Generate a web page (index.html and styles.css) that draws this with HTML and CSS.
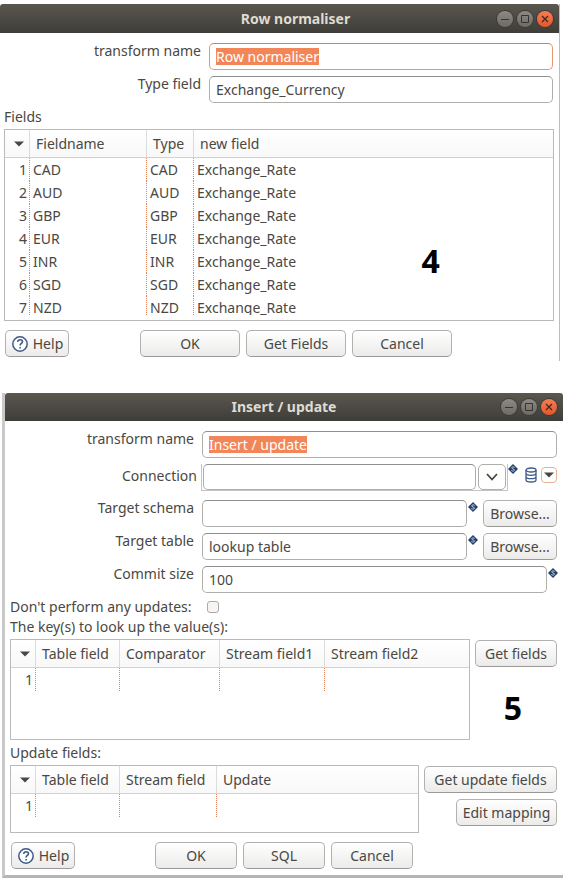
FILE: index.html
```html
<!DOCTYPE html>
<html lang="en">
<head>
<meta charset="utf-8">
<meta name="viewport" content="width=device-width, initial-scale=1">
<title>Transform dialogs</title>
<link rel="stylesheet" href="styles.css">
</head>
<body>
<svg class="defs" aria-hidden="true">
  <symbol id="help" viewBox="0 0 18 18">
    <circle cx="9" cy="9" r="7.2" fill="#fff" stroke="#3d5a86" stroke-width="1.5"/>
    <path d="M6.6 6.9c.2-1.5 1.2-2.2 2.5-2.2 1.4 0 2.4.8 2.4 2 0 1.800-2.400 1.800-2.400 3.800M9.100 12v1.600" fill="none" stroke="#3d5a86" stroke-width="1.600"/>
  </symbol>
  <symbol id="variable" viewBox="0 0 10 10">
    <path d="M5 0l5 5-5 5-5-5z" fill="#24406c"/>
    <path d="M6.700 3.400C5.800 2.600 3.700 2.700 3.700 3.900S6.500 4.900 6.500 6.100 4.300 7.400 3.300 6.500" fill="none" stroke="#c3cede" stroke-width="1"/>
  </symbol>
  <symbol id="database" viewBox="0 0 12 16">
    <g fill="none" stroke="#3d5a86" stroke-width="1.300">
      <ellipse cx="6" cy="3" rx="5" ry="2"/>
      <path d="M1 3v10c0 1.200 2.200 2 5 2s5-.8 5-2V3M1 6.300c0 1.200 2.200 2 5 2s5-.8 5-2M1 9.700c0 1.200 2.200 2 5 2s5-.8 5-2"/>
    </g>
  </symbol>
  <symbol id="triangle" viewBox="0 0 10 6"><path d="M0 .5h10L5 5.500z" fill="#4a4742"/></symbol>
  <symbol id="chevron" viewBox="0 0 12 8"><path d="M1 1l5 5.500L11 1" fill="none" stroke="#4a4742" stroke-width="1.800"/></symbol>
  <symbol id="minimise" viewBox="0 0 16 16"><path d="M4 8.500h8" stroke="#35342f"/></symbol>
  <symbol id="maximise" viewBox="0 0 16 16"><path d="M4.500 4.500h7v7h-7z" fill="none" stroke="#35342f"/></symbol>
  <symbol id="close" viewBox="0 0 16 16"><path d="M5 5l6 6M11 5l-6 6" stroke="#3c2a20" stroke-width="1.200"/></symbol>
</svg>

<main>
<section class="window normaliser">
  <header class="titlebar">
    <h1>Row normaliser</h1>
    <div class="controls">
      <button type="button" class="control" aria-label="Minimise"><svg><use href="#minimise"/></svg></button>
      <button type="button" class="control" aria-label="Maximise"><svg><use href="#maximise"/></svg></button>
      <button type="button" class="control close" aria-label="Close"><svg><use href="#close"/></svg></button>
    </div>
  </header>
  <form class="content">
    <div class="row">
      <label for="n-name">transform name</label>
      <div class="field active"><input id="n-name" class="selected" size="12" value="Row normaliser"></div>
    </div>
    <div class="row">
      <label for="n-type">Type field</label>
      <div class="field"><input id="n-type" value="Exchange_Currency"></div>
    </div>
    <h2>Fields</h2>
    <div class="frame fields-frame">
      <div class="clip">
        <table>
          <colgroup><col class="c-index"><col class="c-name"><col class="c-type"><col></colgroup>
          <thead><tr><th aria-label="Row number"><svg class="sort"><use href="#triangle"/></svg></th><th>Fieldname</th><th>Type</th><th>new field</th></tr></thead>
          <tbody>
            <tr><td>1</td><td>CAD</td><td>CAD</td><td>Exchange_Rate</td></tr>
            <tr><td>2</td><td>AUD</td><td>AUD</td><td>Exchange_Rate</td></tr>
            <tr><td>3</td><td>GBP</td><td>GBP</td><td>Exchange_Rate</td></tr>
            <tr><td>4</td><td>EUR</td><td>EUR</td><td>Exchange_Rate</td></tr>
            <tr><td>5</td><td>INR</td><td>INR</td><td>Exchange_Rate</td></tr>
            <tr><td>6</td><td>SGD</td><td>SGD</td><td>Exchange_Rate</td></tr>
            <tr><td>7</td><td>NZD</td><td>NZD</td><td>Exchange_Rate</td></tr>
          </tbody>
        </table>
      </div>
      <span class="step step-over">4</span>
    </div>
    <footer class="actions">
      <button type="button" class="btn help"><svg><use href="#help"/></svg>Help</button>
      <button type="button" class="btn">OK</button>
      <button type="button" class="btn">Get Fields</button>
      <button type="button" class="btn">Cancel</button>
    </footer>
  </form>
</section>

<section class="window update">
  <header class="titlebar">
    <h1>Insert / update</h1>
    <div class="controls">
      <button type="button" class="control" aria-label="Minimise"><svg><use href="#minimise"/></svg></button>
      <button type="button" class="control" aria-label="Maximise"><svg><use href="#maximise"/></svg></button>
      <button type="button" class="control close" aria-label="Close"><svg><use href="#close"/></svg></button>
    </div>
  </header>
  <form class="content">
    <div class="row">
      <label for="u-name">transform name</label>
      <div class="field"><input id="u-name" class="selected" size="12" value="Insert / update"></div>
    </div>
    <div class="row connection">
      <label for="u-conn">Connection</label>
      <div class="combo">
        <div class="field"><input id="u-conn"></div>
        <button type="button" class="drop" aria-label="Show connections"><svg><use href="#chevron"/></svg></button>
      </div>
      <svg class="variable"><use href="#variable"/></svg>
      <div class="tools">
        <svg class="database"><use href="#database"/></svg>
        <button type="button" class="menu" aria-label="Connection menu"><svg><use href="#triangle"/></svg></button>
      </div>
    </div>
    <div class="row">
      <label for="u-schema">Target schema</label>
      <div class="field"><input id="u-schema"></div>
      <svg class="variable"><use href="#variable"/></svg>
      <button type="button" class="btn browse">Browse...</button>
    </div>
    <div class="row">
      <label for="u-table">Target table</label>
      <div class="field"><input id="u-table" value="lookup table"></div>
      <svg class="variable"><use href="#variable"/></svg>
      <button type="button" class="btn browse">Browse...</button>
    </div>
    <div class="row">
      <label for="u-commit">Commit size</label>
      <div class="field"><input id="u-commit" value="100"></div>
      <svg class="variable"><use href="#variable"/></svg>
    </div>
    <div class="check"><label for="u-skip">Don't perform any updates:</label><input type="checkbox" id="u-skip"></div>
    <h2>The key(s) to look up the value(s):</h2>
    <div class="split">
      <div class="frame keys-frame">
        <table>
          <colgroup><col class="c-index"><col class="c-table"><col class="c-comparator"><col class="c-stream1"><col></colgroup>
          <thead><tr><th aria-label="Row number"><svg class="sort"><use href="#triangle"/></svg></th><th>Table field</th><th>Comparator</th><th>Stream field1</th><th>Stream field2</th></tr></thead>
          <tbody><tr><td>1</td><td></td><td></td><td></td><td></td></tr></tbody>
        </table>
      </div>
      <div class="side">
        <button type="button" class="btn">Get fields</button>
        <span class="step">5</span>
      </div>
    </div>
    <h2>Update fields:</h2>
    <div class="split">
      <div class="frame update-frame">
        <table>
          <colgroup><col class="c-index"><col class="c-table"><col class="c-stream"><col></colgroup>
          <thead><tr><th aria-label="Row number"><svg class="sort"><use href="#triangle"/></svg></th><th>Table field</th><th>Stream field</th><th>Update</th></tr></thead>
          <tbody><tr><td>1</td><td></td><td></td><td></td></tr></tbody>
        </table>
      </div>
      <div class="side wide">
        <button type="button" class="btn">Get update fields</button>
        <button type="button" class="btn mapping">Edit mapping</button>
      </div>
    </div>
    <footer class="actions">
      <button type="button" class="btn help"><svg><use href="#help"/></svg>Help</button>
      <button type="button" class="btn">OK</button>
      <button type="button" class="btn">SQL</button>
      <button type="button" class="btn">Cancel</button>
    </footer>
  </form>
</section>
</main>
</body>
</html>
```
FILE: styles.css
```css
* { box-sizing: border-box; }

body {
  margin: 0;
  background: #fff;
  color: #4a4843;
  font: 14px/20px "Noto Sans", "Open Sans", sans-serif;
}

button, input { font: inherit; color: inherit; margin: 0; }
svg { display: block; flex: none; }
.defs { position: absolute; width: 0; height: 0; }

main {
  display: flex;
  flex-direction: column;
  gap: 32px;
  padding: 4px 5px 0 0;
}

/* Windows */
.normaliser { margin-right: 3px; border-right: 1px solid #bdbdbd; }
.update {
  margin-left: 2px;
  border-left: 3px solid #c9c9c9;
  border-bottom: 3px solid #b5b5b5;
}

.titlebar {
  display: flex;
  align-items: center;
  height: 29px;
  padding: 0 6px 0 62px;
  background: linear-gradient(#5a574e, #3e3d39);
  border-radius: 3px 3px 0 0;
  color: #dfdbd2;
}
.normaliser .titlebar { padding-left: 94px; }
.update .titlebar { height: 28px; }
.titlebar h1 {
  flex: 1;
  margin: 0;
  text-align: center;
  font-size: 14px;
  line-height: 20px;
  font-weight: 700;
}
.controls { display: flex; gap: 4px; }
.control {
  width: 16px;
  height: 16px;
  padding: 0;
  border: 0;
  border-radius: 50%;
  background: linear-gradient(#8c8a82, #6c6a63);
  box-shadow: 0 0 0 1px #3c3b37;
}
.control svg { width: 16px; height: 16px; }
.control.close { background: linear-gradient(#f67d53, #e5582b); }

/* Form rows */
.content { display: flex; flex-direction: column; padding: 10px 6px 4px 4px; }
.update .content { padding: 10px 6px 6px 5px; }
.row { display: flex; align-items: flex-start; margin-bottom: 6px; }
.row label {
  flex: none;
  width: 197px;
  margin-right: 8px;
  line-height: 16px;
  text-align: right;
}
.update .row label { width: 184px; }

.field {
  flex: 1;
  display: flex;
  align-items: center;
  min-width: 0;
  height: 27px;
  padding: 0 6px;
  border: 1px solid #b0aeab;
  border-top-color: #8f8f8f;
  border-radius: 5px;
  background: #fff;
}
.field.active { border-color: #e9966f; border-top-color: #df7d52; }
.field input {
  width: 100%;
  height: 20px;
  padding: 0;
  border: 0;
  outline: 0;
  background: none;
}
.field .selected {
  width: auto;
  height: 17px;
  field-sizing: content;
  background: #f28659;
  color: #fff;
}

.update .connection { margin-bottom: 9px; }
.update .connection label { width: 187px; margin-right: 4px; line-height: 24px; }
.combo {
  flex: 1;
  display: flex;
  gap: 2px;
  padding: 0 1px;
  border: 1px solid #c4c4c4;
  border-top: 0;
}
.drop {
  display: grid;
  place-items: center;
  width: 28px;
  height: 26px;
  padding: 0;
  border: 1px solid #b0aeab;
  border-radius: 5px;
  background: #fff;
}
.combo .field { height: 26px; }
.drop svg { width: 12px; height: 8px; }
.variable { width: 10px; height: 10px; margin: 2px 0 0 1px; }
.connection .variable { margin: 0; }
.update .row:nth-child(5) { margin-right: -1px; }
.tools { display: flex; gap: 4px; margin: 3px 0 0 7px; }
.database { width: 12px; height: 16px; }
.menu {
  display: grid;
  place-items: center;
  width: 16px;
  height: 16px;
  padding: 0;
  border: 1px solid #eab295;
  border-radius: 4px;
  background: #fff;
}
.menu svg { width: 10px; height: 6px; }

/* Buttons */
.btn {
  height: 27px;
  padding: 0;
  border: 1px solid #b3b1ae;
  border-bottom-color: #9b9996;
  border-radius: 5px;
  background: linear-gradient(#fff, #ecebea);
  text-align: center;
  white-space: nowrap;
}
.browse { width: 74px; margin-left: 5px; }

h2 { margin: 0; font-size: 14px; line-height: 20px; font-weight: 400; }
.normaliser h2 { margin: -2px 0 2px; }

.check { display: flex; align-items: center; height: 20px; margin-top: -2px; }
.check label { width: 197px; }
.check input {
  appearance: none;
  width: 12px;
  height: 12px;
  border: 1px solid #aaa;
  border-radius: 3px;
  background: #f6f5f4;
}

/* Tables */
.frame { position: relative; flex: 1; min-width: 0; border: 1px solid #bababa; }
.fields-frame { margin-right: -1px; padding-bottom: 5px; }
.clip { height: 185px; overflow: hidden; }
table { width: 100%; table-layout: fixed; border-collapse: separate; border-spacing: 0; }
th {
  height: 28px;
  padding: 0 0 0 6px;
  border-bottom: 1px solid #d2d2d2;
  background: linear-gradient(#fff, #f8f8f8);
  font-weight: 400;
  text-align: left;
  white-space: nowrap;
}
td { height: 23px; padding: 0 0 0 3px; white-space: nowrap; }
th + th { border-left: 1px solid #dcdcdc; }
td + td { border-left: 1px dotted #e08158; }
td:first-child { padding: 0 2px 0 0; text-align: right; }
.sort { width: 10px; height: 6px; margin-left: 3px; }
.c-index { width: 24px; }
.c-name { width: 117px; }
.c-type { width: 47px; }
.c-table { width: 84px; }
.c-comparator { width: 100px; }
.c-stream1 { width: 105px; }
.c-stream { width: 97px; }

.keys-frame { height: 101px; }
.update-frame { height: 68px; }
.split { display: flex; gap: 5px; margin-top: 2px; }
.split + h2 { margin-top: 3px; }
.side { display: flex; flex-direction: column; gap: 6px; width: 82px; padding-top: 1px; }
.side.wide { width: 133px; }
.mapping { width: 101px; align-self: flex-end; }

.step { color: #000; font-size: 32px; line-height: 40px; font-weight: 700; }
.step-over { position: absolute; left: 76%; top: 111px; }
.side .step { margin-top: 15px; padding-right: 6px; text-align: center; }

/* Footer */
.actions { display: flex; gap: 6px; margin-top: 9px; padding-left: 1px; }
.actions .btn { width: 100px; }
.update .actions .btn { width: 82px; }
.actions .help, .update .actions .help {
  display: flex;
  align-items: center;
  justify-content: center;
  gap: 4px;
  width: 64px;
  margin-right: 65px;
}
.update .actions .help { margin-right: 74px; }
.help svg { width: 18px; height: 18px; }
```
